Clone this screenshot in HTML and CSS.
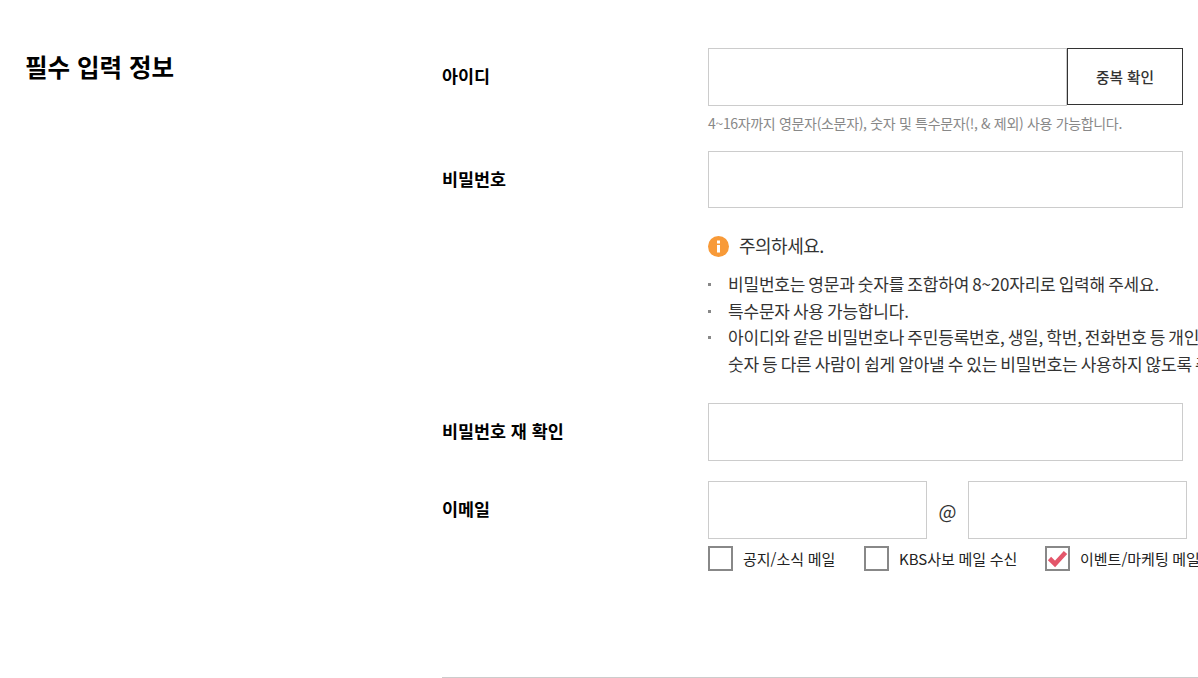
FILE: index.html
```html
<!DOCTYPE html>
<html lang="ko">
<head>
  <meta charset="UTF-8" />
  <title>회원가입</title>
  <link rel="stylesheet" href="styles.css">
</head>
<body>
  <div class="join-section">
    <h2 class="section-title">필수 입력 정보</h2>
    <div class="form-area">
      <div class="form-row row-id">
        <label class="form-label">아이디</label>
        <div class="form-field">
          <div class="id-group">
            <input type="text" class="input-box input-id">
            <button type="button" class="btn-check">중복 확인</button>
          </div>
          <p class="hint">4~16자까지 영문자(소문자), 숫자 및 특수문자(!, &amp; 제외) 사용 가능합니다.</p>
        </div>
      </div>

      <div class="form-row row-pw">
        <label class="form-label">비밀번호</label>
        <div class="form-field">
          <input type="password" class="input-box input-wide input-pw">
          <div class="notice">
            <svg class="notice-icon" width="21" height="21" viewBox="0 0 21 21">
              <circle cx="10.5" cy="10.5" r="10.5" fill="#f89a38"/>
              <rect x="9" y="4.5" width="3" height="3" fill="#fff"/>
              <rect x="9" y="9" width="3" height="7.5" fill="#fff"/>
            </svg>
            <span>주의하세요.</span>
          </div>
          <ul class="notice-list">
            <li>비밀번호는 영문과 숫자를 조합하여 8~20자리로 입력해 주세요.</li>
            <li>특수문자 사용 가능합니다.</li>
            <li>아이디와 같은 비밀번호나 주민등록번호, 생일, 학번, 전화번호 등 개인정보와 관련된<br>숫자 등 다른 사람이 쉽게 알아낼 수 있는 비밀번호는 사용하지 않도록 주의해 주세요.</li>
          </ul>
        </div>
      </div>

      <div class="form-row row-confirm">
        <label class="form-label">비밀번호 재 확인</label>
        <div class="form-field">
          <input type="password" class="input-box input-wide">
        </div>
      </div>

      <div class="form-row row-email">
        <label class="form-label">이메일</label>
        <div class="form-field">
          <div class="email-group">
            <input type="text" class="input-box input-email">
            <span class="at">@</span>
            <input type="text" class="input-box input-email">
          </div>
          <div class="check-group">
            <label class="check-item item-notice"><span class="check-box"></span>공지/소식 메일</label>
            <label class="check-item item-kbs"><span class="check-box"></span>KBS사보 메일 수신</label>
            <label class="check-item"><span class="check-box">
              <svg width="21" height="21" viewBox="0 0 21 21"><path d="M2.5 10.5 L8 16 L18.5 4.5" fill="none" stroke="#e4566a" stroke-width="4.6"/></svg>
            </span>이벤트/마케팅 메일 수신</label>
          </div>
        </div>
      </div>
      <div class="form-end"></div>
    </div>
  </div>
</body>
</html>
```

FILE: styles.css
```css
* { margin:0; padding:0; box-sizing:border-box; font-family:"Noto Sans CJK KR","Noto Sans",sans-serif; }
html, body { height:100%; overflow:hidden; background:#fff; }
.join-section {
  display:flex;
  width:1198px;
  padding:48px 0 0 25px;
}
.section-title {
  width:417px;
  flex:none;
  font-size:24.5px;
  line-height:38px;
  font-weight:700;
  color:#000;
}
.form-area { width:756px; flex:none; }
.form-row { display:flex; }
.form-label {
  width:266px;
  flex:none;
  font-size:17.4px;
  line-height:24px;
  font-weight:700;
  color:#000;
  padding-top:16px;
}
.form-field { flex:1; min-width:0; }
.input-box {
  display:block;
  height:58px;
  border:1px solid #ccc;
  background:#fff;
  outline:none;
}
.input-wide { width:475px; }
.input-pw { height:57px; }
.id-group { display:flex; }
.input-id { width:359px; }
.btn-check {
  width:116px;
  height:57px;
  border:1px solid #333;
  background:#fff;
  color:#333;
  font-size:14.7px;
  font-weight:500;
}
.hint {
  margin-top:8px;
  font-size:14px;
  line-height:19px;
  color:#888;
  letter-spacing:-0.33px;
}
.row-pw { margin-top:18px; }
.notice {
  display:flex;
  align-items:center;
  gap:10px;
  margin-top:28px;
  font-size:18px;
  line-height:21px;
  color:#333;
  letter-spacing:-0.5px;
}
.notice span { margin-top:-2px; }
.notice-list {
  list-style:none;
  margin-top:14px;
  white-space:nowrap;
}
.notice-list li {
  position:relative;
  padding-left:20px;
  font-size:17px;
  line-height:26.5px;
  color:#333;
  letter-spacing:-0.2px;
  word-spacing:-1.4px;
}
.notice-list li::before {
  content:"";
  position:absolute;
  left:0;
  top:12px;
  width:3px;
  height:3px;
  background:#888;
}
.row-confirm { margin-top:26px; }
.row-email { margin-top:20px; }
.email-group { display:flex; align-items:center; }
.input-email { width:219px; }
.at {
  width:41px;
  text-align:center;
  font-size:19px;
  color:#333;
}
.check-group {
  display:flex;
  margin-top:7px;
  white-space:nowrap;
}
.check-item {
  display:flex;
  flex:none;
  align-items:center;
  font-size:15px;
  line-height:25px;
  color:#222;
  word-spacing:-0.6px;
}
.item-notice { width:156px; }
.item-kbs { width:181px; }
.check-box {
  width:25px;
  height:25px;
  flex:none;
  margin-right:10px;
  border:2px solid #888;
  display:block;
  background:#fff;
  overflow:hidden;
}
.check-box svg { display:block; }
.form-end {
  margin-top:106px;
  border-top:1px solid #ccc;
}
```
